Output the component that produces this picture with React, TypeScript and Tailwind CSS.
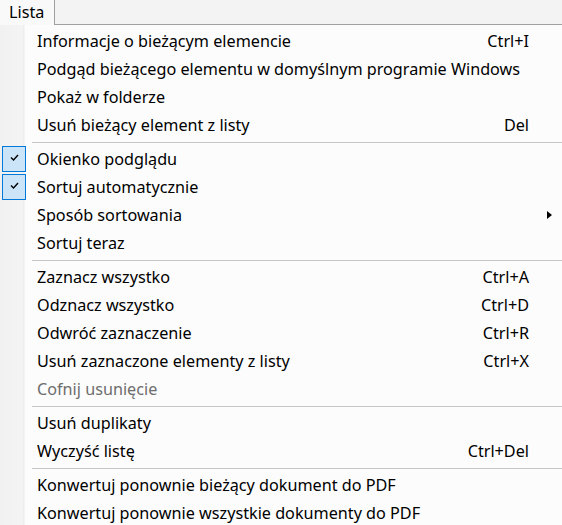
type Item =
  | { kind: "sep" }
  | {
      kind: "item";
      label: string;
      shortcut?: string;
      checked?: boolean;
      disabled?: boolean;
      submenu?: boolean;
    };

const items: Item[] = [
  { kind: "item", label: "Informacje o bieżącym elemencie", shortcut: "Ctrl+I" },
  { kind: "item", label: "Podgąd bieżącego elementu w domyślnym programie Windows" },
  { kind: "item", label: "Pokaż w folderze" },
  { kind: "item", label: "Usuń bieżący element z listy", shortcut: "Del" },
  { kind: "sep" },
  { kind: "item", label: "Okienko podglądu", checked: true },
  { kind: "item", label: "Sortuj automatycznie", checked: true },
  { kind: "item", label: "Sposób sortowania", submenu: true },
  { kind: "item", label: "Sortuj teraz" },
  { kind: "sep" },
  { kind: "item", label: "Zaznacz wszystko", shortcut: "Ctrl+A" },
  { kind: "item", label: "Odznacz wszystko", shortcut: "Ctrl+D" },
  { kind: "item", label: "Odwróć zaznaczenie", shortcut: "Ctrl+R" },
  { kind: "item", label: "Usuń zaznaczone elementy z listy", shortcut: "Ctrl+X" },
  { kind: "item", label: "Cofnij usunięcie", disabled: true },
  { kind: "sep" },
  { kind: "item", label: "Usuń duplikaty" },
  { kind: "item", label: "Wyczyść listę", shortcut: "Ctrl+Del" },
  { kind: "sep" },
  { kind: "item", label: "Konwertuj ponownie bieżący dokument do PDF" },
  { kind: "item", label: "Konwertuj ponownie wszystkie dokumenty do PDF" },
];

function CheckBox() {
  return (
    <div className="ml-[2px] flex h-[26px] w-[24px] items-center justify-center border border-[#0078d7] bg-[#cce4f7]">
      <svg width="9" height="7" viewBox="0 0 9 7" className="mb-[3px]">
        <path d="M1 3.5 L3.5 6 L8 1" fill="none" stroke="#000" strokeWidth="1.4" />
      </svg>
    </div>
  );
}

export default function App() {
  return (
    <div className="h-screen overflow-hidden bg-[#fcfcfc] font-['Noto_Sans',sans-serif] text-[16.2px] text-black">
      {/* Menu bar */}
      <div className="flex h-[25px]">
        <div className="flex w-[55px] items-center border-r border-[#a0a0a0] bg-[#f9f9f9] pl-[9px]">
          Lista
        </div>
        <div className="flex-1 border-b border-[#a0a0a0] bg-[#f3f3f3]" />
      </div>

      {/* Drop-down */}
      <div className="bg-[linear-gradient(to_right,#f1f1f1_0px,#f4f4f4_22px,#ececec_24px,#fcfcfc_25px)] pt-[2px]">
        {items.map((it, i) =>
          it.kind === "sep" ? (
            <div key={i} className="h-[6px] pl-[32px] pt-[3px]">
              <div className="h-px w-full bg-[#c6c6c6]" />
            </div>
          ) : (
            <div key={i} className="flex h-[28px] items-center">
              <div className="flex w-[37px] shrink-0 items-center">
                {it.checked && <CheckBox />}
              </div>
              <div
                className={`flex-1 whitespace-nowrap ${
                  it.disabled ? "text-[#6d6d6d]" : "text-black"
                }`}
              >
                {it.label}
              </div>
              {it.shortcut && (
                <div className="whitespace-nowrap pr-[33px]">{it.shortcut}</div>
              )}
              {it.submenu && (
                <svg width="5" height="8" viewBox="0 0 5 8" className="mr-[10px]">
                  <path d="M0 0 L5 4 L0 8 Z" fill="#000" />
                </svg>
              )}
            </div>
          )
        )}
      </div>
    </div>
  );
}
